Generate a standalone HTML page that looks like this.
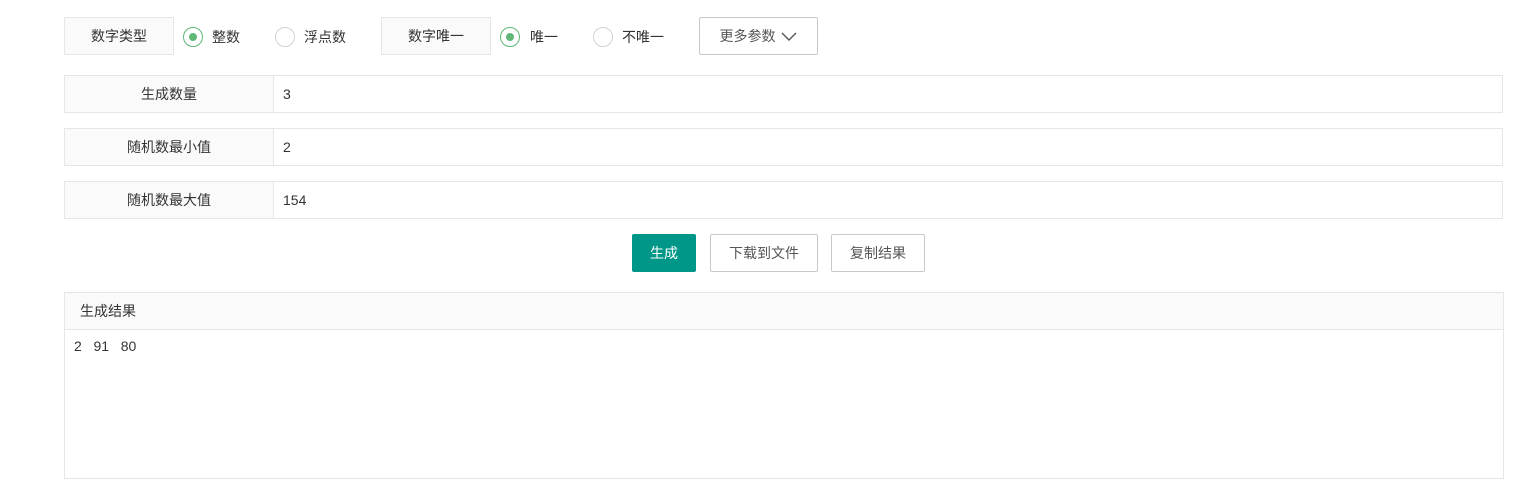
<!DOCTYPE html>
<html><head><meta charset="utf-8"><style>
body{margin:0;background:#fff;font-family:"Liberation Sans","Noto Sans CJK SC",sans-serif;font-size:14px;color:#333;width:1519px;height:499px;overflow:hidden;position:relative}
.a{position:absolute;box-sizing:border-box}
.lab{background:#fafafa;border:1px solid #e6e6e6;display:flex;align-items:center;justify-content:center}
.radio{width:20px;height:20px;border:1px solid #d2d2d2;border-radius:50%}
.radio.on{border-color:#5fb878}
.radio.on:after{content:"";position:absolute;left:5px;top:5px;width:8px;height:8px;border-radius:50%;background:#5fb878}
.row{border:1px solid #e6e6e6;height:38px;left:64px;width:1439px}
.row .l{position:absolute;left:0;top:0;bottom:0;width:208px;background:#fafafa;border-right:1px solid #e6e6e6;display:flex;align-items:center;justify-content:center}
.row .v{position:absolute;left:218px;top:10px}
.btn{border:1px solid #c9c9c9;display:flex;align-items:center;justify-content:center;color:#555;height:38px;border-radius:2px}
</style></head><body>
<div class="a lab" style="left:64px;top:17px;width:110px;height:38px">数字类型</div>
<div class="a radio on" style="left:183px;top:27px"></div><div class="a" style="left:212px;top:27px">整数</div>
<div class="a radio" style="left:275px;top:27px"></div><div class="a" style="left:304px;top:27px">浮点数</div>
<div class="a lab" style="left:381px;top:17px;width:110px;height:38px">数字唯一</div>
<div class="a radio on" style="left:500px;top:27px"></div><div class="a" style="left:530px;top:27px">唯一</div>
<div class="a radio" style="left:593px;top:27px"></div><div class="a" style="left:622px;top:27px">不唯一</div>
<div class="a btn" style="left:699px;top:17px;width:119px">更多参数 <svg width="18" height="12" style="margin-left:4px"><path d="M2 3l7 7 7-7" fill="none" stroke="#555" stroke-width="1.4"/></svg></div>
<div class="a row" style="top:75px"><div class="l">生成数量</div><div class="v">3</div></div>
<div class="a row" style="top:128px"><div class="l">随机数最小值</div><div class="v">2</div></div>
<div class="a row" style="top:181px"><div class="l">随机数最大值</div><div class="v">154</div></div>
<div class="a btn" style="left:632px;top:234px;width:64px;background:#009688;border-color:#009688;color:#fff">生成</div>
<div class="a btn" style="left:710px;top:234px;width:108px">下载到文件</div>
<div class="a btn" style="left:831px;top:234px;width:94px">复制结果</div>
<div class="a" style="left:64px;top:292px;width:1440px;height:187px;border:1px solid #e6e6e6">
<div style="height:36px;background:#fafafa;border-bottom:1px solid #e6e6e6;line-height:36px;padding-left:15px">生成结果</div>
<div style="padding:8px 0 0 9px">2&nbsp;&nbsp;&nbsp;91&nbsp;&nbsp;&nbsp;80</div>
</div>
</body></html>
